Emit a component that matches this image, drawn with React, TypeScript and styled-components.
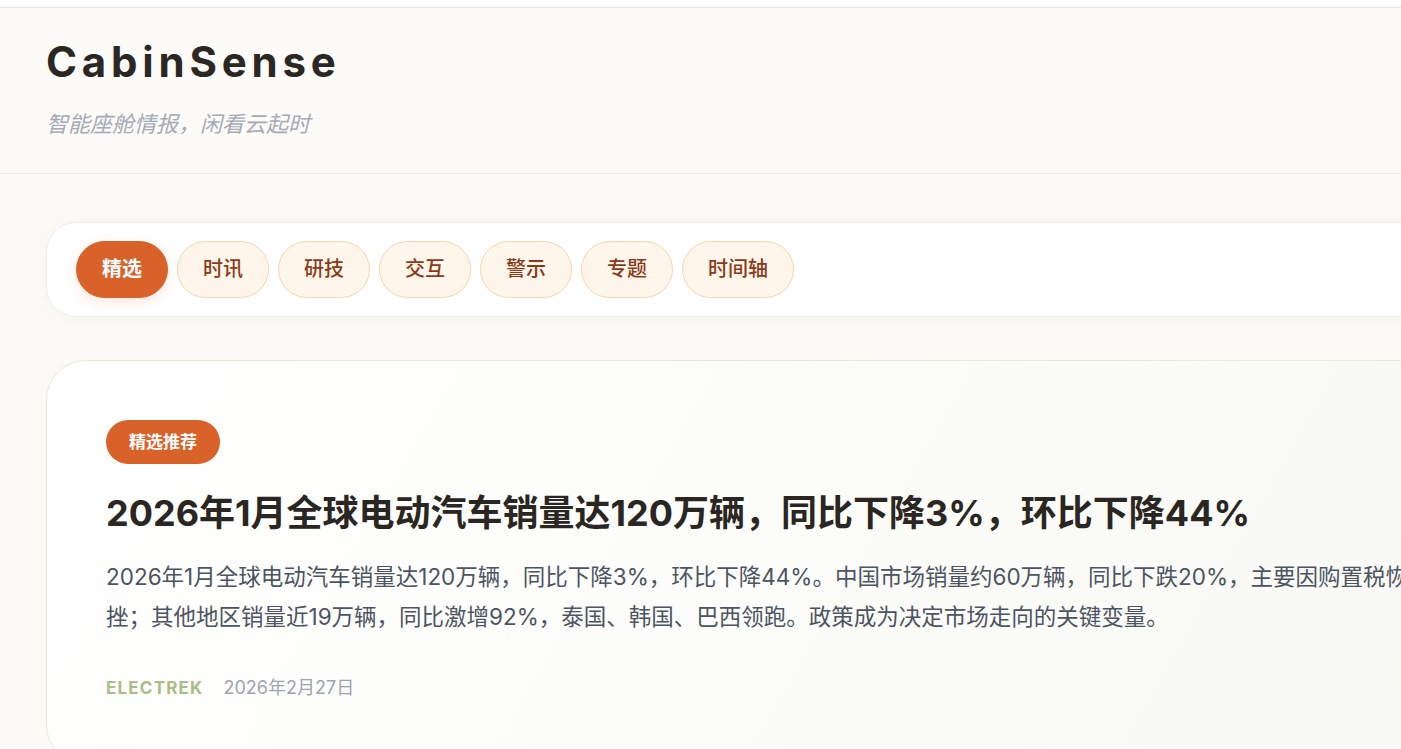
import React from 'react';
import styled, { createGlobalStyle } from 'styled-components';

const GlobalStyle = createGlobalStyle`
  html {
    scrollbar-width: none;
  }
  html::-webkit-scrollbar {
    display: none;
  }
  body {
    margin: 0;
    background: #fbfaf7;
    font-family: Inter, "Noto Sans CJK SC", sans-serif;
    overflow-x: hidden;
  }
`;

const TopStrip = styled.div`
  height: 7px;
  background: #ffffff;
  border-bottom: 1px solid #e4e4e4;
`;

const Header = styled.header`
  background: #fcfbf8;
  border-bottom: 1px solid #efece6;
  padding: 28px 46px 34px;
`;

const Brand = styled.h1`
  margin: 0;
  font-size: 42px;
  line-height: 52px;
  font-weight: 700;
  letter-spacing: 4.8px;
  color: #2b2824;
`;

const Tagline = styled.p`
  margin: 21px 0 0;
  font-size: 22px;
  line-height: 30px;
  font-style: italic;
  color: #a5aab5;
`;

const Main = styled.main`
  width: 1628px;
  padding: 48px 46px 60px;
  display: flex;
  flex-direction: column;
  gap: 43px;
`;

const TabBar = styled.nav`
  display: flex;
  gap: 9px;
  padding: 18px 29px;
  background: #ffffff;
  border: 1px solid #f0eee8;
  border-radius: 30px;
  box-shadow: 0 2px 10px rgba(120, 100, 60, 0.04);
`;

const Tab = styled.button<{ $active?: boolean }>`
  font-family: Inter, "Noto Sans CJK SC", sans-serif;
  font-size: 20px;
  line-height: 31px;
  font-weight: ${p => (p.$active ? 700 : 500)};
  padding: 12px 25px;
  border-radius: 999px;
  border: 1px solid ${p => (p.$active ? '#d9622b' : '#f4d7ae')};
  background: ${p => (p.$active ? '#d9622b' : '#fef5eb')};
  color: ${p => (p.$active ? '#ffffff' : '#8b3a17')};
  box-shadow: ${p => (p.$active ? '0 4px 12px rgba(217, 98, 43, 0.16)' : 'none')};
  cursor: pointer;
`;

const Card = styled.article`
  padding: 59px 59px 64px;
  border: 1px solid #e7e9dc;
  border-radius: 40px;
  background: linear-gradient(120deg, #ffffff 0%, #fbfbf8 55%, #f6f6f1 100%);
`;

const Badge = styled.span`
  display: inline-block;
  padding: 10px 23px;
  border-radius: 999px;
  background: #d9622b;
  color: #ffffff;
  font-size: 17px;
  line-height: 24px;
  font-weight: 700;
`;

const Title = styled.h2`
  margin: 26px 0 0;
  font-size: 36px;
  line-height: 47px;
  font-weight: 700;
  color: #2a2621;
`;

const Summary = styled.p`
  margin: 20px 0 0;
  font-size: 22.5px;
  line-height: 40px;
  color: #4d5461;
`;

const Meta = styled.div`
  display: flex;
  align-items: center;
  gap: 20px;
  margin-top: 39px;
  line-height: 24px;
`;

const Source = styled.span`
  font-size: 17px;
  font-weight: 700;
  letter-spacing: 1.2px;
  color: #a9bd86;
`;

const DateText = styled.span`
  font-size: 18px;
  color: #9ea3ad;
`;

const tabs = ['精选', '时讯', '研技', '交互', '警示', '专题', '时间轴'];

export default function App() {
  return (
    <>
      <GlobalStyle />
      <TopStrip />
      <Header>
        <Brand>CabinSense</Brand>
        <Tagline>智能座舱情报，闲看云起时</Tagline>
      </Header>
      <Main>
        <TabBar>
          {tabs.map((t, i) => (
            <Tab key={t} $active={i === 0}>
              {t}
            </Tab>
          ))}
        </TabBar>
        <Card>
          <Badge>精选推荐</Badge>
          <Title>2026年1月全球电动汽车销量达120万辆，同比下降3%，环比下降44%</Title>
          <Summary>
            2026年1月全球电动汽车销量达120万辆，同比下降3%，环比下降44%。中国市场销量约60万辆，同比下跌20%，主要因购置税恢复征收导致需求受挫；其他地区销量近19万辆，同比激增92%，泰国、韩国、巴西领跑。政策成为决定市场走向的关键变量。
          </Summary>
          <Meta>
            <Source>ELECTREK</Source>
            <DateText>2026年2月27日</DateText>
          </Meta>
        </Card>
      </Main>
    </>
  );
}
